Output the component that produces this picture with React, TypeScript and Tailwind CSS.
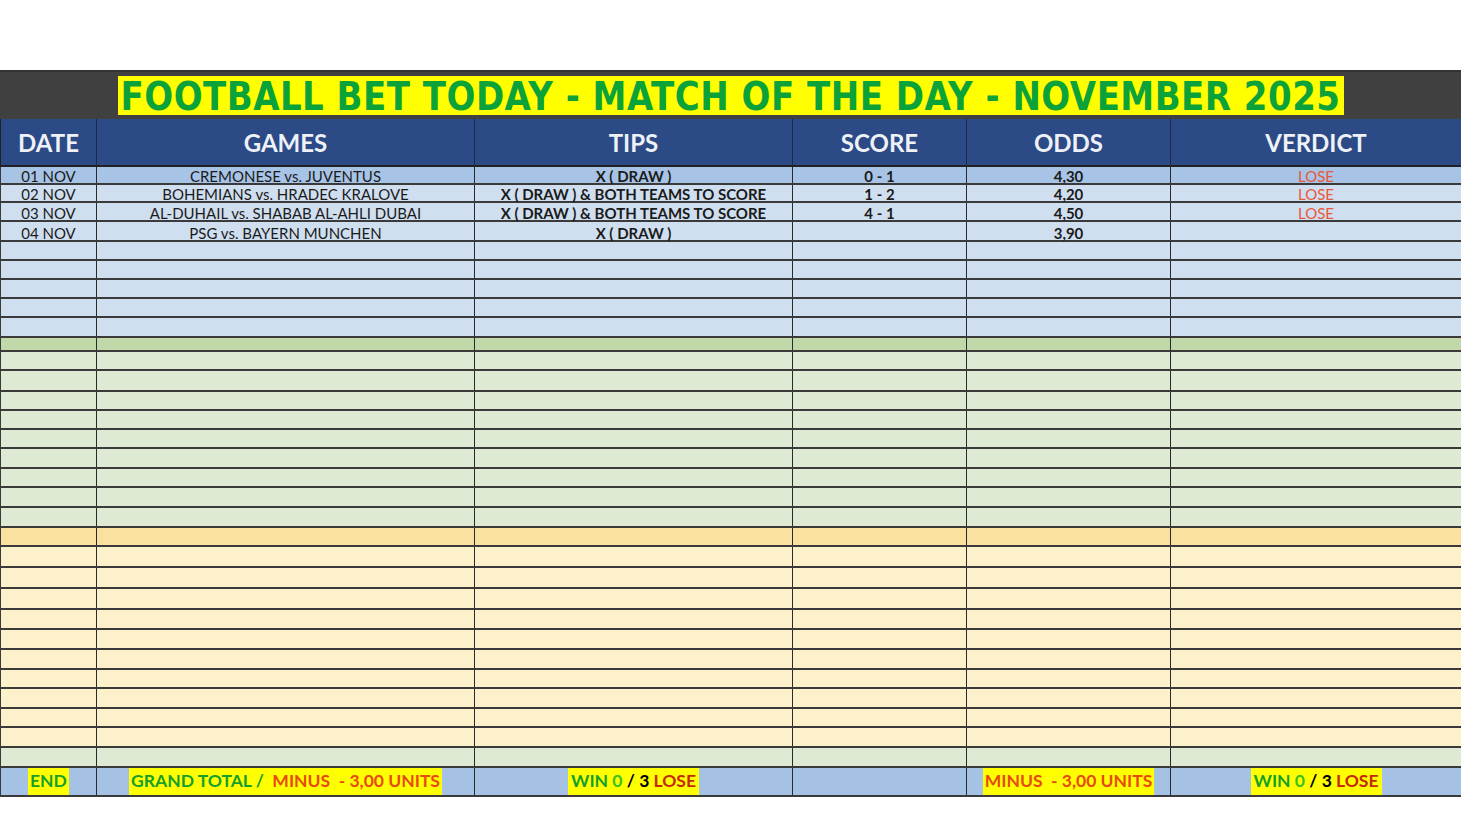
import React from "react";

type Bet = {
  date: string;
  game: string;
  tip: string;
  score: string;
  odds: string;
  verdict: string;
};

const bets: Bet[] = [
  { date: "01 NOV", game: "CREMONESE vs. JUVENTUS", tip: "X ( DRAW )", score: "0 - 1", odds: "4,30", verdict: "LOSE" },
  { date: "02 NOV", game: "BOHEMIANS vs. HRADEC KRALOVE", tip: "X ( DRAW ) & BOTH TEAMS TO SCORE", score: "1 - 2", odds: "4,20", verdict: "LOSE" },
  { date: "03 NOV", game: "AL-DUHAIL vs. SHABAB AL-AHLI DUBAI", tip: "X ( DRAW ) & BOTH TEAMS TO SCORE", score: "4 - 1", odds: "4,50", verdict: "LOSE" },
  { date: "04 NOV", game: "PSG vs. BAYERN MUNCHEN", tip: "X ( DRAW )", score: "", odds: "3,90", verdict: "" },
];

// row colours / heights, top to bottom (Excel bands)
const rows: { bg: string; h: string }[] = [
  { bg: "bg-[#a7c4e7]", h: "h-[18px]" },
  { bg: "bg-[#d0dff0]", h: "h-[18px]" },
  { bg: "bg-[#d0dff0]", h: "h-[19px]" },
  { bg: "bg-[#d0dff0]", h: "h-[20px]" },
  { bg: "bg-[#d0dff0]", h: "h-[19px]" },
  { bg: "bg-[#d0dff0]", h: "h-[19px]" },
  { bg: "bg-[#d0dff0]", h: "h-[19px]" },
  { bg: "bg-[#d0dff0]", h: "h-[19px]" },
  { bg: "bg-[#d0dff0]", h: "h-[20px]" },
  { bg: "bg-[#c3d8a9]", h: "h-[14px]" },
  { bg: "bg-[#dfead4]", h: "h-[19px]" },
  { bg: "bg-[#dfead4]", h: "h-[21px]" },
  { bg: "bg-[#dfead4]", h: "h-[19px]" },
  { bg: "bg-[#dfead4]", h: "h-[19px]" },
  { bg: "bg-[#dfead4]", h: "h-[19px]" },
  { bg: "bg-[#dfead4]", h: "h-[20px]" },
  { bg: "bg-[#dfead4]", h: "h-[19px]" },
  { bg: "bg-[#dfead4]", h: "h-[20px]" },
  { bg: "bg-[#dfead4]", h: "h-[20px]" },
  { bg: "bg-[#fbe1a0]", h: "h-[19px]" },
  { bg: "bg-[#fdf1cc]", h: "h-[21px]" },
  { bg: "bg-[#fdf1cc]", h: "h-[21px]" },
  { bg: "bg-[#fdf1cc]", h: "h-[21px]" },
  { bg: "bg-[#fdf1cc]", h: "h-[20px]" },
  { bg: "bg-[#fdf1cc]", h: "h-[20px]" },
  { bg: "bg-[#fdf1cc]", h: "h-[20px]" },
  { bg: "bg-[#fdf1cc]", h: "h-[19px]" },
  { bg: "bg-[#fdf1cc]", h: "h-[20px]" },
  { bg: "bg-[#fdf1cc]", h: "h-[19px]" },
  { bg: "bg-[#fdf1cc]", h: "h-[20px]" },
  { bg: "bg-[#dfead4]", h: "h-[20px]" },
];

const cols = "grid grid-cols-[96px_378px_318px_174px_204px_291px]";
const cell = "border-r border-[#2a2a2a] flex items-end justify-center whitespace-nowrap";
const font = { fontFamily: "Lato, 'Open Sans', sans-serif" };

function WinLose() {
  return (
    <span className="bg-[#ffff00] px-[3px]">
      <span className="text-[#14a02a]">WIN </span>
      <span className="text-[#3cc21a]">0</span>
      <span className="text-black"> / 3 </span>
      <span className="text-[#c42a0a]">LOSE</span>
    </span>
  );
}

export default function App() {
  return (
    <div className="w-[1461px] h-[832px] bg-white pt-[70px]" style={font}>
      {/* title bar */}
      <div className="h-[49px] bg-[#404040] border-t-2 border-[#333] flex items-center justify-center">
        <div
          className="bg-[#ffff00] w-[1226px] h-[39px] flex items-center justify-center text-[#0ba23a] text-[34px] font-black tracking-[0.5px] leading-none whitespace-nowrap"
          style={{ fontFamily: "'DejaVu Sans', sans-serif" }}
        >
          <span className="inline-block scale-y-[1.15]">
            FOOTBALL BET TODAY - MATCH OF THE DAY - NOVEMBER 2025
          </span>
        </div>
      </div>

      {/* header */}
      <div className={`${cols} h-[48px] bg-[#2b4a86] border-l border-b-2 border-[#222] text-[#eef1f6] text-[24px] font-bold`}>
        {["DATE", "GAMES", "TIPS", "SCORE", "ODDS", "VERDICT"].map((h) => (
          <div key={h} className="border-r border-[#1c2a48] flex items-center justify-center pt-[2px]">
            {h}
          </div>
        ))}
      </div>

      {/* body */}
      {rows.map((r, i) => {
        const b = bets[i];
        return (
          <div key={i} className={`${cols} ${r.h} ${r.bg} border-l border-b-2 border-[#3a3a3a] text-[15px] leading-[14px] text-[#1b1b1b]`}>
            <div className={cell}>{b?.date}</div>
            <div className={cell}>{b?.game}</div>
            <div className={`${cell} font-bold`}>{b?.tip}</div>
            <div className={`${cell} font-bold`}>{b?.score}</div>
            <div className={`${cell} font-bold`}>{b?.odds}</div>
            <div className={`${cell} text-[#e8583a]`}>{b?.verdict}</div>
          </div>
        );
      })}

      {/* totals */}
      <div className={`${cols} h-[29px] bg-[#a5c2e4] border-l border-b-2 border-[#3a3a3a] text-[17.5px] font-bold`}>
        <div className="border-r border-[#2a2a2a] flex items-center justify-center">
          <span className="bg-[#ffff00] text-[#14a02a] px-[2px]">END</span>
        </div>
        <div className="border-r border-[#2a2a2a] flex items-center justify-center">
          <span className="bg-[#ffff00] px-[2px] whitespace-pre">
            <span className="text-[#14a02a]">GRAND TOTAL /  </span>
            <span className="text-[#e84a10]">MINUS  - 3,00 UNITS</span>
          </span>
        </div>
        <div className="border-r border-[#2a2a2a] flex items-center justify-center">
          <WinLose />
        </div>
        <div className="border-r border-[#2a2a2a]" />
        <div className="border-r border-[#2a2a2a] flex items-center justify-center">
          <span className="bg-[#ffff00] text-[#e84a10] px-[2px] whitespace-pre">MINUS  - 3,00 UNITS</span>
        </div>
        <div className="border-r border-[#2a2a2a] flex items-center justify-center">
          <WinLose />
        </div>
      </div>
    </div>
  );
}
